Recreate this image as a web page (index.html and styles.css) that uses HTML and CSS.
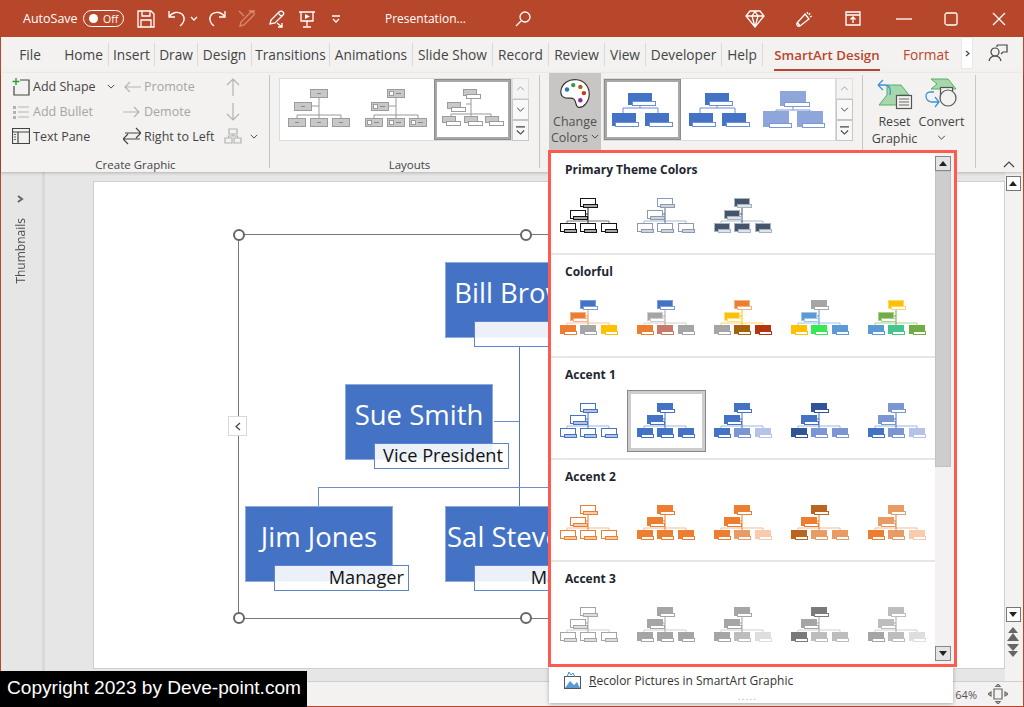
FILE: index.html
```html
<!DOCTYPE html>
<html lang="en">
<head>
<meta charset="utf-8">
<title>Presentation</title>
<link rel="stylesheet" href="styles.css">
</head>
<body>
<svg class="defs" width="0" height="0" aria-hidden="true">
  <symbol id="org" viewBox="0 0 58 36">
    <path class="o-hl" d="M7 25V23H49V25"/>
    <path class="o-vl" d="M28 9V25M25 16H28"/>
    <rect class="o-1" x="20.5" y=".5" width="15" height="8"/><rect class="o-s1" x="23.5" y="6.5" width="14" height="3"/>
    <rect class="o-2" x="10.5" y="12.5" width="15" height="8"/><rect class="o-s2" x="13.5" y="18.5" width="14" height="3"/>
    <rect class="o-3" x=".5" y="25.5" width="15" height="8"/><rect class="o-s3" x="4.5" y="31.5" width="12" height="3"/>
    <rect class="o-4" x="20.5" y="25.5" width="15" height="8"/><rect class="o-s4" x="24.5" y="31.5" width="12" height="3"/>
    <rect class="o-5" x="41.5" y="25.5" width="15" height="8"/><rect class="o-s5" x="45.5" y="31.5" width="12" height="3"/>
  </symbol>
  <symbol id="lay-a" viewBox="0 0 62 38">
    <path class="l-l" d="M9 29V26H53V29M31 9V29M23 17H31"/>
    <rect class="l-b" x="22.5" y=".5" width="17" height="8"/><rect class="l-b" x="6.5" y="13.5" width="17" height="8"/>
    <rect class="l-b" x=".5" y="29.5" width="17" height="8"/><rect class="l-b" x="22.5" y="29.5" width="17" height="8"/><rect class="l-b" x="44.5" y="29.5" width="17" height="8"/>
    <path class="l-d" d="M29 4.500H33M13 17.500H17M7 33.500H11M29 33.500H33M51 33.500H55"/>
  </symbol>
  <symbol id="lay-b" viewBox="0 0 62 38">
    <path class="l-l" d="M9 29V26H53V29M31 9V29M23 17H31"/>
    <rect class="l-b" x="22.500" y=".5" width="17" height="8"/><rect class="l-b" x="6.500" y="13.500" width="17" height="8"/>
    <rect class="l-b" x=".5" y="29.500" width="17" height="8"/><rect class="l-b" x="22.500" y="29.500" width="17" height="8"/><rect class="l-b" x="44.500" y="29.500" width="17" height="8"/>
    <rect class="l-w" x="24.500" y="2.500" width="4" height="4"/><rect class="l-w" x="8.500" y="15.500" width="4" height="4"/><rect class="l-w" x="2.500" y="31.500" width="4" height="4"/><rect class="l-w" x="24.500" y="31.500" width="4" height="4"/><rect class="l-w" x="46.500" y="31.500" width="4" height="4"/>
    <path class="l-d" d="M31 4.500H36M15 17.500H20M9 33.500H14M31 33.500H36M53 33.500H58"/>
  </symbol>
  <symbol id="lay-c" viewBox="0 0 62 38">
    <path class="l-l" d="M9 27V25H49V27M29 9V27M24 15H29"/>
    <rect class="l-b" x="21.500" y=".5" width="13" height="6"/><rect class="l-w2" x="24.500" y="5.500" width="14" height="4"/>
    <rect class="l-b" x="5.500" y="13.500" width="13" height="6"/><rect class="l-w2" x="9.500" y="18.500" width="14" height="4"/>
    <rect class="l-b" x=".5" y="27.500" width="13" height="6"/><rect class="l-w2" x="4.500" y="32.500" width="14" height="4"/>
    <rect class="l-b" x="22.500" y="27.500" width="13" height="6"/><rect class="l-w2" x="26.500" y="32.500" width="14" height="4"/>
    <rect class="l-b" x="43.500" y="27.500" width="13" height="6"/><rect class="l-w2" x="47.500" y="32.500" width="14" height="4"/>
  </symbol>
  <symbol id="big" viewBox="0 0 62 35">
    <path class="b-l" d="M11 21V16H46V21M28 14V16"/>
    <rect class="b-b" x="16" y="1" width="24" height="12"/><rect class="b-s" x="20.500" y="9.500" width="23" height="4"/>
    <rect class="b-b" y="21" width="24" height="13"/><rect class="b-s" x="3.500" y="30.500" width="23" height="4"/>
    <rect class="b-b" x="33" y="21" width="24" height="13"/><rect class="b-s" x="37.500" y="30.500" width="23" height="4"/>
  </symbol>
  <symbol id="big-wide" viewBox="0 0 62 37">
    <path class="b-l" d="M13 21V19H47V21M30 15V19"/>
    <rect class="b-b" x="17" y="0" width="26" height="15"/><rect class="b-s" x="21.500" y="11.500" width="25" height="4"/>
    <rect class="b-b" y="20" width="26" height="16"/><rect class="b-s" x="6.500" y="32.500" width="22" height="4"/>
    <rect class="b-b" x="34" y="20" width="26" height="16"/><rect class="b-s" x="39.500" y="32.500" width="22" height="4"/>
  </symbol>
  <symbol id="chev-d" viewBox="0 0 10 6"><path class="chev" d="M1 1L5 5L9 1"/></symbol>
  <symbol id="chev-u" viewBox="0 0 10 6"><path class="chev" d="M1 5L5 1L9 5"/></symbol>
  <symbol id="more" viewBox="0 0 10 10"><path class="chev" d="M0 1H10M1 5L5 9L9 5"/></symbol>
</svg>

<div class="window">
  <header class="titlebar">
    <span class="autosave">AutoSave</span>
    <span class="toggle"><i class="knob"></i><b class="toggle-off">Off</b></span>
    <svg class="ti m13" width="18" height="18" viewBox="0 0 18 18"><path d="M1 1H14L17 4V17H1ZM5 1V6H13V1M4 17V10H14V17"/></svg>
    <svg class="ti m13" width="18" height="18" viewBox="0 0 18 18"><path d="M1 1V7H7M1 7C4 2 10 1 14 4C18 8 16 13 12 16"/></svg>
    <svg class="ti m4 tiny" width="8" height="5" viewBox="0 0 8 5"><path d="M1 1L4 4L7 1"/></svg>
    <svg class="ti m10" width="18" height="18" viewBox="0 0 18 18"><path d="M17 1V7H11M17 7C14 2 8 1 4 4C0 8 2 13 6 16"/></svg>
    <svg class="ti ti-dim m12" width="18" height="18" viewBox="0 0 18 18"><path d="M2 16L3 12L12 3C13 2 15 2 16 3C17 4 16 5 15 6L6 15ZM1 1L6 6M11 1H17"/></svg>
    <svg class="ti m12" width="18" height="18" viewBox="0 0 18 18"><path d="M2 14L3 10L11 2C12 1 14 1 15 2C16 3 16 4 15 5L7 13ZM10 3L14 7M9 13L14 17M14 13V17H10"/></svg>
    <svg class="ti m12" width="18" height="18" viewBox="0 0 18 18"><path d="M1 2H17M3 2V11H15V2M9 11V16M5 17H13"/><path class="fill" d="M7 4L12 6.500L7 9Z"/></svg>
    <svg class="ti m16 tiny" width="8" height="8" viewBox="0 0 8 8"><path d="M0 1H8M1 4L4 7L7 4"/></svg>
    <span class="doc-title">Presentation...</span>
    <svg class="ti m50" width="16" height="16" viewBox="0 0 16 16"><circle cx="10" cy="6" r="5"/><path d="M6 10L1 15"/></svg>
    <svg class="ti m214" width="20" height="18" viewBox="0 0 20 18"><path d="M5 1H15L19 6L10 17L1 6ZM1 6H19M7 6L10 17L13 6L10 1.500L7 6"/></svg>
    <svg class="ti m30" width="18" height="18" viewBox="0 0 18 18"><path d="M10 4L14 9L5 16C3 17 1 15 2 13ZM5 16L2 12M12 2L13 4M15 3L14 5M17 6L15 7"/></svg>
    <svg class="ti m32" width="16" height="15" viewBox="0 0 16 15"><path d="M1 1H15V14H1ZM1 4H15M8 12V6M5.500 8.500L8 6L10.500 8.500"/></svg>
    <svg class="ti m35" width="16" height="16" viewBox="0 0 16 16"><path d="M0 8H16"/></svg>
    <svg class="ti m32" width="14" height="14" viewBox="0 0 14 14"><rect x="1" y="1" width="12" height="12" rx="2"/></svg>
    <svg class="ti m34" width="14" height="14" viewBox="0 0 14 14"><path d="M1 1L13 13M13 1L1 13"/></svg>
  </header>

  <nav class="tabs">
    <span class="tab plain">File</span>
    <span class="tab">Home</span>
    <span class="tab">Insert</span>
    <span class="tab">Draw</span>
    <span class="tab">Design</span>
    <span class="tab">Transitions</span>
    <span class="tab">Animations</span>
    <span class="tab">Slide Show</span>
    <span class="tab">Record</span>
    <span class="tab">Review</span>
    <span class="tab">View</span>
    <span class="tab">Developer</span>
    <span class="tab">Help</span>
    <span class="tab plain ctx"><span class="ctx-active">SmartArt Design</span></span>
    <span class="tab plain ctx">Format</span>
    <span class="tab-more"><svg width="5" height="7" viewBox="0 0 5 7"><path class="chev" d="M1 1L4 3.500L1 6"/></svg></span>
    <span class="tab-comment"><svg width="20" height="20" viewBox="0 0 20 20"><circle cx="7" cy="9" r="4"/><path d="M1 18C2 14 4 13 7 13C10 13 12 14 13 18M9 2H19V9H15L13 11M9 2V4"/></svg></span>
  </nav>

  <section class="ribbon">
    <div class="group g-create">
      <div class="g-body create-grid">
        <div class="cmd"><svg width="18" height="18" viewBox="0 0 18 18"><path class="i-dark" d="M8 2H17V17H2V8"/><path class="i-green" d="M4 0V7M0.500 3.500H7.500"/></svg><span>Add Shape</span><svg class="cmd-chev" width="8" height="5"><use href="#chev-d"/></svg></div>
        <div class="cmd off"><svg width="18" height="12" viewBox="0 0 18 12"><path class="i-off" d="M18 6H2M7 1L2 6L7 11"/></svg><span>Promote</span></div>
        <div class="cmd off arrows"><svg width="16" height="18" viewBox="0 0 16 18"><path class="i-off" d="M8 18V1M2 7L8 1L14 7"/></svg></div>
        <div class="cmd off"><svg width="18" height="16" viewBox="0 0 18 16"><path class="i-off-f" d="M1 2H4V5H1ZM1 7H4V10H1ZM1 12H4V15H1Z"/><path class="i-off" d="M6 3H17M6 8H17M6 13H17"/></svg><span>Add Bullet</span></div>
        <div class="cmd off"><svg width="18" height="12" viewBox="0 0 18 12"><path class="i-off" d="M0 6H16M11 1L16 6L11 11"/></svg><span>Demote</span></div>
        <div class="cmd off arrows"><svg width="16" height="18" viewBox="0 0 16 18"><path class="i-off" d="M8 0V17M2 11L8 17L14 11"/></svg></div>
        <div class="cmd"><svg width="18" height="16" viewBox="0 0 18 16"><path class="i-dark" d="M.500 .500H17.500V15.500H.500ZM.500 4H17.500M6 4V15.500"/><path class="i-mid" d="M2 6.500H4M2 9H4M2 11.500H4"/></svg><span>Text Pane</span></div>
        <div class="cmd"><svg width="18" height="18" viewBox="0 0 18 18"><path class="i-dark" d="M17 6H2M13 1L18 6L13 11M17 12H1M5 7L0 12L5 17"/></svg><span>Right to Left</span></div>
        <div class="cmd off hier"><svg width="18" height="16" viewBox="0 0 18 16"><path class="i-off" d="M5 1H13V6H5ZM1 10H8V15H1ZM10 10H17V15H10ZM9 6V8M4.500 10V8H13.500V10"/></svg><svg class="cmd-chev" width="8" height="5"><use href="#chev-d"/></svg></div>
      </div>
      <div class="g-label">Create Graphic</div>
    </div>

    <div class="group g-layouts">
      <div class="g-body gallery-row">
        <div class="gallery">
          <div class="gal-item lift"><svg width="62" height="38"><use href="#lay-a"/></svg></div>
          <div class="gal-item lift"><svg width="62" height="38"><use href="#lay-b"/></svg></div>
          <div class="gal-item lift selected"><svg width="62" height="38"><use href="#lay-c"/></svg></div>
        </div>
        <div class="gal-scroll">
          <span class="disabled"><svg width="9" height="5"><use href="#chev-u"/></svg></span>
          <span><svg width="9" height="5"><use href="#chev-d"/></svg></span>
          <span><svg width="9" height="9"><use href="#more"/></svg></span>
        </div>
      </div>
      <div class="g-label">Layouts</div>
    </div>

    <div class="group g-colors">
      <div class="change-colors">
        <svg width="32" height="32" viewBox="0 0 36 36">
          <path class="pal" d="M2 15C3 6 11 1 20 2C29 3 34 10 34 18C34 26 28 34 22 33C18 32 20 27 17 24C14 21 10 24 6 22C3 21 2 18 2 15Z"/>
          <circle class="d1" cx="9" cy="13" r="2.500"/><circle class="d2" cx="16" cy="8" r="2.500"/><circle class="d3" cx="24" cy="10" r="2.500"/><circle class="d4" cx="28" cy="17" r="2.500"/><circle class="d5" cx="24" cy="25" r="2.500"/>
        </svg>
        <span>Change</span>
        <span class="cc-t2">Colors <svg width="8" height="5"><use href="#chev-d"/></svg></span>
      </div>
      <div class="gallery-row">
        <div class="gallery">
          <div class="gal-item selected blue"><svg width="62" height="35"><use href="#big"/></svg></div>
          <div class="gal-item blue"><svg width="62" height="35"><use href="#big"/></svg></div>
          <div class="gal-item pale nudge"><svg width="62" height="37"><use href="#big-wide"/></svg></div>
        </div>
        <div class="gal-scroll">
          <span class="disabled"><svg width="9" height="5"><use href="#chev-u"/></svg></span>
          <span><svg width="9" height="5"><use href="#chev-d"/></svg></span>
          <span><svg width="9" height="9"><use href="#more"/></svg></span>
        </div>
      </div>
    </div>

    <div class="group g-reset">
      <div class="big-btn">
        <svg width="36" height="32" viewBox="0 0 36 32"><path class="gr" d="M10 7H24L32 17H22V27H2L10 17Z"/><path class="bl" d="M1 7L6 2M1 7L6 12M1 7H8C13 7 14 12 13 17"/><rect class="doc" x="19.500" y="17.500" width="15" height="13"/><path class="i-mid" d="M22 21H32M22 24H32M22 27H32"/></svg>
        <span>Reset</span><span>Graphic</span>
      </div>
      <div class="big-btn">
        <svg width="36" height="32" viewBox="0 0 36 32"><path class="gr" d="M7 1H24L32 11H7L13 6Z"/><rect class="doc" x="16.500" y="9.500" width="12" height="12"/><circle class="doc" cx="24" cy="20" r="8"/><path class="bl" d="M10 14H6C1 14 0 22 7 24H15M11 19L15 24L11 29"/></svg>
        <span>Convert</span><svg class="conv-chev" width="9" height="5"><use href="#chev-d"/></svg>
      </div>
    </div>
    <svg class="collapse" width="12" height="7" viewBox="0 0 12 7"><path class="chev" d="M1 6L6 1L11 6"/></svg>
  </section>

  <main class="workspace">
    <aside class="thumbs">
      <svg width="7" height="8" viewBox="0 0 7 8"><path class="chev thick" d="M1 1L5 4L1 7"/></svg>
      <span class="thumbs-label">Thumbnails</span>
    </aside>
    <div class="canvas">
      <div class="slide">
        <div class="frame">
          <i class="handle h-tl"></i><i class="handle h-tm"></i><i class="handle h-bl"></i><i class="handle h-bm"></i><i class="handle h-tr"></i><i class="handle h-br"></i>
        </div>
        <div class="collapse-tab"><svg width="6" height="9" viewBox="0 0 6 9"><path class="chev" d="M5 1L1 4.500L5 8"/></svg></div>
        <i class="ln ln-v"></i><i class="ln ln-sue"></i><i class="ln ln-h"></i><i class="ln ln-jim"></i>
        <div class="node n-bill"><span class="name">Bill Brown</span><span class="role"></span></div>
        <div class="node n-sue"><span class="name">Sue Smith</span><span class="role">Vice President</span></div>
        <div class="node n-jim"><span class="name">Jim Jones</span><span class="role">Manager</span></div>
        <div class="node n-sal"><span class="name">Sal Stevens</span><span class="role">Manager</span></div>
      </div>
    </div>
    <div class="vscroll">
      <span class="vs-btn"><i class="tri-up"></i></span>
      <span class="vs-track"></span>
      <span class="vs-btn"><i class="tri-down"></i></span>
      <svg class="vs-page" width="14" height="32" viewBox="0 0 14 32"><path class="pg" d="M7 1L12 7H2ZM7 7L13 15H1ZM1 18H13L7 25ZM2 25H12L7 31Z"/></svg>
    </div>
  </main>

  <footer class="status">
    <span class="zoom">64%</span>
    <svg width="20" height="20" viewBox="0 0 20 20"><path class="i-mid" d="M6 5H14V15H6ZM10 0L8 2.500H12ZM10 20L8 17.500H12ZM0 10L3 8V12ZM20 10L17 8V12Z"/></svg>
  </footer>

  <div class="menu">
    <div class="panel">
      <div class="sections">
        <section class="sec">
          <h3>Primary Theme Colors</h3>
          <div class="th-row">
            <svg class="th p1" width="58" height="36"><use href="#org"/></svg>
            <svg class="th p2" width="58" height="36"><use href="#org"/></svg>
            <svg class="th p3" width="58" height="36"><use href="#org"/></svg>
          </div>
        </section>
        <section class="sec">
          <h3>Colorful</h3>
          <div class="th-row">
            <svg class="th c1" width="58" height="36"><use href="#org"/></svg>
            <svg class="th c2" width="58" height="36"><use href="#org"/></svg>
            <svg class="th c3" width="58" height="36"><use href="#org"/></svg>
            <svg class="th c4" width="58" height="36"><use href="#org"/></svg>
            <svg class="th c5" width="58" height="36"><use href="#org"/></svg>
          </div>
        </section>
        <section class="sec acc1">
          <h3>Accent 1</h3>
          <div class="th-row">
            <svg class="th v1" width="58" height="36"><use href="#org"/></svg>
            <span class="sel"><svg class="th v2" width="58" height="36"><use href="#org"/></svg></span>
            <svg class="th v3" width="58" height="36"><use href="#org"/></svg>
            <svg class="th v4" width="58" height="36"><use href="#org"/></svg>
            <svg class="th v5" width="58" height="36"><use href="#org"/></svg>
          </div>
        </section>
        <section class="sec acc2">
          <h3>Accent 2</h3>
          <div class="th-row">
            <svg class="th v1" width="58" height="36"><use href="#org"/></svg>
            <svg class="th v2" width="58" height="36"><use href="#org"/></svg>
            <svg class="th v3" width="58" height="36"><use href="#org"/></svg>
            <svg class="th v4" width="58" height="36"><use href="#org"/></svg>
            <svg class="th v5" width="58" height="36"><use href="#org"/></svg>
          </div>
        </section>
        <section class="sec acc3">
          <h3>Accent 3</h3>
          <div class="th-row">
            <svg class="th v1" width="58" height="36"><use href="#org"/></svg>
            <svg class="th v2" width="58" height="36"><use href="#org"/></svg>
            <svg class="th v3" width="58" height="36"><use href="#org"/></svg>
            <svg class="th v4" width="58" height="36"><use href="#org"/></svg>
            <svg class="th v5" width="58" height="36"><use href="#org"/></svg>
          </div>
        </section>
      </div>
      <div class="menu-scroll">
        <span class="ms-btn"><i class="tri-up"></i></span>
        <span class="ms-thumb"></span>
        <span class="ms-track"></span>
        <span class="ms-btn"><i class="tri-down"></i></span>
      </div>
    </div>
    <div class="recolor">
      <svg width="19" height="19" viewBox="0 0 19 19"><rect class="rc-frame" x="1.500" y="5.500" width="16" height="12"/><path class="rc-hill" d="M2 17L7 10L11 14L14 11L17 17Z"/><path class="rc-top" d="M4 6L6 1L8 4L10 2L12 6"/></svg>
      <span><u>R</u>ecolor Pictures in SmartArt Graphic</span>
    </div>
    <div class="grip">.....</div>
  </div>

  <div class="copyright">Copyright 2023 by Deve-point.com</div>
</div>
</body>
</html>
```
FILE: styles.css
```css
* { box-sizing: border-box; }
html, body { margin: 0; padding: 0; }
body { width: 1024px; height: 707px; overflow: hidden; font-family: "Open Sans", "Noto Sans", sans-serif; color: #444; }
.defs { position: absolute; }
svg { display: block; flex: none; fill: none; }
i { display: block; font-style: normal; }

.window { position: relative; width: 1024px; height: 707px; padding: 0 1px 1px; background: #b7472a; display: flex; flex-direction: column; overflow: hidden; }

/* title bar */
.titlebar { height: 37px; flex: none; display: flex; align-items: center; padding-left: 22px; color: #fff; }
.autosave { width: 54px; font-size: 12.5px; white-space: nowrap; }
.toggle { margin-left: 6px; width: 41px; height: 17px; border: 1.500px solid #fff; border-radius: 9px; display: flex; align-items: center; padding-left: 5px; }
.knob { width: 9px; height: 9px; border-radius: 50%; background: #fff; }
.toggle-off { font-weight: 400; font-size: 10.500px; margin-left: 5px; }
.ti { stroke: #fff; stroke-width: 1.300; }
.ti path, .ti rect, .ti circle { fill: none; }
.ti path.fill { fill: #fff; stroke: none; }
.ti-dim { stroke: #d98a70; }
.m4 { margin-left: 4px; } .m10 { margin-left: 10px; } .m12 { margin-left: 12px; } .m13 { margin-left: 13px; }
.m16 { margin-left: 16px; } .m30 { margin-left: 30px; } .m32 { margin-left: 32px; } .m34 { margin-left: 34px; }
.m35 { margin-left: 35px; } .m50 { margin-left: 50px; } .m214 { margin-left: 214px; }
.doc-title { margin-left: 45px; width: 80px; font-size: 12px; white-space: nowrap; }

/* tabs */
.tabs { height: 36px; flex: none; background: #f3f2f1; display: grid; grid-template-columns: 58px 50px 46px 43px 54px 78px 83px 80px 56px 56px 41px 76px 41px 128px 70px 12px 1fr; align-items: center; font-size: 13.700px; }
.tab { height: 23px; line-height: 23px; text-align: center; white-space: nowrap; border-right: 1px solid #dbdad9; margin-top: -2px; }
.tab.plain { border-right: 0; }
.ctx { color: #b7472a; }
.ctx-active { display: inline-block; font-weight: 600; font-size: 13.300px; border-bottom: 2px solid #b7472a; height: 27px; }
.tab-more { height: 32px; margin-top: -4px; background: #fff; border: 1px solid #e8e8e8; display: flex; align-items: center; justify-content: center; }
.tab-comment { display: flex; justify-content: center; margin-top: -4px; }
.tab-comment path, .tab-comment circle { stroke: #444; stroke-width: 1.200; }
.chev { stroke: #444; stroke-width: 1.200; fill: none; }
.chev.thick { stroke-width: 2; stroke: #666; }

/* ribbon */
.ribbon { height: 99px; flex: none; background: #f3f2f1; display: flex; position: relative; box-shadow: 0 1px 3px rgba(0, 0, 0, .22); z-index: 1; }
.group { display: flex; flex-direction: column; position: relative; }
.group::after { content: ""; position: absolute; right: 0; top: 2px; bottom: 4px; width: 1px; background: #c8c6c4; }
.g-create { width: 269px; }
.g-layouts { width: 270px; padding-left: 9px; }
.g-colors { width: 323px; padding-left: 9px; flex-direction: row; }
.g-reset { width: 113px; flex-direction: row; padding-left: 8px; }
.g-body { flex: 1; }
.g-label { height: 16px; flex: none; display: flex; align-items: center; justify-content: center; font-size: 11.500px; }
.create-grid { display: grid; grid-template-columns: 111px 101px 1fr; grid-template-rows: 25px 25px 24px; align-content: start; padding: 1px 0 0 11px; font-size: 12.500px; white-space: nowrap; }
.cmd { display: flex; align-items: center; gap: 3px; }
.cmd.off { color: #a6a5a4; }
.cmd-chev { margin-left: 8px; }
.arrows svg:first-child { margin-left: 1px; }
.hier { gap: 0; }
.i-dark { stroke: #444; stroke-width: 1.200; }
.i-mid { stroke: #666; stroke-width: 1.200; }
.i-green { stroke: #22a33a; stroke-width: 1.400; }
.i-off { stroke: #b4b3b2; stroke-width: 1.200; }
.i-off-f { fill: #b4b3b2; }

.gallery-row { display: flex; padding-top: 5px; height: 68px; }
.gallery { width: 233px; height: 63px; background: #fff; border: 1px solid #dcdbda; display: flex; }
.gal-item { width: 77px; height: 61px; display: flex; align-items: center; justify-content: center; flex: none; }
.gal-item svg { filter: blur(.3px); }
.lift { padding-bottom: 3px; }
.nudge { padding-right: 5px; }
.gal-item.selected { border: 3px solid #a8a8a8; outline: 1px solid #8c8c8c; outline-offset: -1px; }
.gal-scroll { width: 17px; height: 63px; display: flex; flex-direction: column; }
.gal-scroll span { flex: 1; border: 1px solid #c8c6c4; background: #f8f8f8; display: flex; align-items: center; justify-content: center; }
.gal-scroll .disabled { opacity: .45; }
.l-l { stroke: #999; }
.l-b { fill: #c8c8c8; stroke: #9c9c9c; }
.l-d { stroke: #888; }
.l-w { fill: #fff; stroke: #9c9c9c; }
.l-w2 { fill: #fff; stroke: #9c9c9c; }

.change-colors { width: 52px; height: 77px; background: #c8c6c4; display: flex; flex-direction: column; align-items: center; margin-right: 2px; padding-top: 5px; font-size: 12.500px; line-height: 16px; color: #505050; }
.change-colors svg:first-child { margin-bottom: 4px; }
.cc-t2 { display: flex; align-items: center; gap: 3px; white-space: nowrap; }
.pal { fill: #fff; stroke: #333; stroke-width: 1.300; }
.d1 { fill: #2f6fc4; } .d2 { fill: #3d9a4a; } .d3 { fill: #a5601c; } .d4 { fill: #c8381f; } .d5 { fill: #8a2aa0; }
.blue { --bf: #4472c4; --bs: #6a8fd3; }
.pale { --bf: #8ea6d9; --bs: #7c97d2; }
.b-b { fill: var(--bf); stroke: none; }
.b-s { fill: #fff; stroke: var(--bs); }
.b-l { stroke: var(--bs); }

.big-btn { width: 47px; display: flex; flex-direction: column; align-items: center; padding-top: 5px; font-size: 12.500px; line-height: 17px; flex: none; white-space: nowrap; }
.big-btn svg:first-child { margin-bottom: 3px; }
.conv-chev { margin-top: 5px; }
.gr { fill: #a7d7ac; stroke: #53b063; }
.bl { stroke: #3b93d8; stroke-width: 1.300; }
.doc { fill: #f3f2f1; stroke: #555; stroke-width: 1.200; }
.collapse { position: absolute; left: 1002px; bottom: 4px; }

/* workspace */
.workspace { flex: 1; min-height: 0; display: flex; background: #e6e6e6; }
.thumbs { width: 44px; flex: none; border-right: 3px solid #d9d9d9; display: flex; flex-direction: column; align-items: center; padding: 23px 2px 0 0; gap: 15px; }
.thumbs-label { writing-mode: vertical-rl; transform: rotate(180deg); font-size: 12px; line-height: 14px; color: #505050; }
.canvas { flex: 1; padding: 10px 1px 13px 49px; min-width: 0; display: flex; }
.slide { position: relative; flex: 1; background: #fff; box-shadow: 0 0 0 1px #cfcfcf; }
.frame { position: absolute; left: 144px; top: 52px; width: 576px; height: 385px; border: 1px solid #777; }
.handle { position: absolute; width: 12px; height: 12px; border-radius: 50%; border: 2px solid #666; background: #fff; z-index: 3; }
.h-tl { left: -6px; top: -6px; } .h-tm { left: 281px; top: -6px; } .h-tr { right: -6px; top: -6px; }
.h-bl { left: -6px; bottom: -6px; } .h-bm { left: 281px; bottom: -6px; } .h-br { right: -6px; bottom: -6px; }
.collapse-tab { position: absolute; left: 134px; top: 234px; width: 19px; height: 20px; background: #fff; border: 1px solid #d9d9d9; display: flex; align-items: center; justify-content: center; z-index: 3; }
.ln { position: absolute; background: #6c8ec9; }
.ln-v { left: 425px; top: 165px; width: 1px; height: 159px; background: #5b76b4; }
.ln-sue { left: 400px; top: 239px; width: 25px; height: 1px; }
.ln-h { left: 224px; top: 305px; width: 400px; height: 1px; }
.ln-jim { left: 224px; top: 305px; width: 1px; height: 19px; }
.node { position: absolute; width: 148px; height: 76px; background: #4472c4; border: 1px solid #8faadc; color: #fff; font-size: 27.500px; line-height: 1; display: flex; justify-content: center; padding-top: 16px; white-space: nowrap; }
.role { position: absolute; left: 28px; top: 58px; width: 135px; height: 26px; background: rgba(255, 255, 255, .9); border: 1px solid #5b85cf; color: #111; font-size: 18.200px; line-height: 22px; text-align: right; padding-right: 4px; }
.n-bill { left: 351px; top: 80px; }
.n-sue { left: 251px; top: 202px; }
.n-sue .role { padding-right: 5px; }
.n-jim { left: 151px; top: 324px; }
.n-sal { left: 351px; top: 324px; }
.n-sal .role { padding-right: 2px; }

.vscroll { width: 18px; flex: none; background: #f3f2f1; display: flex; flex-direction: column; align-items: center; padding: 4px 2px 0 0; position: relative; }
.vs-btn { width: 15px; height: 15px; background: #fff; border: 1px solid #777; display: flex; align-items: center; justify-content: center; flex: none; }
.vs-track { height: 416px; flex: none; }
.vs-page { margin-top: 4px; }
.pg { fill: #666; }
.tri-up { border-left: 4px solid transparent; border-right: 4px solid transparent; border-bottom: 5px solid #222; }
.tri-down { border-left: 4px solid transparent; border-right: 4px solid transparent; border-top: 5px solid #222; }

/* status bar */
.status { height: 25px; flex: none; background: #f3f2f1; border-top: 1px solid #cfcfcf; display: flex; align-items: center; justify-content: flex-end; padding-right: 15px; font-size: 11px; gap: 11px; position: relative; }
.zoom { color: #555; }

/* colors menu */
.menu { position: absolute; left: 548px; top: 150px; width: 409px; z-index: 5; }
.panel { height: 517px; border: 3px solid #ff5a50; background: #fff; display: flex; position: relative; z-index: 1; }
.sections { width: 384px; flex: none; }
.sec { height: 102px; border-bottom: 2px solid #e6e6e6; }
.sec:nth-child(2) { height: 103px; }
.sec:last-child { border-bottom: 0; }
.sec h3 { margin: 0; padding: 7px 0 0 14px; height: 26px; font-size: 12px; line-height: 20px; font-weight: 700; color: #1e2630; }
.th-row { display: flex; gap: 19px; padding: 19px 0 0 9px; }
.th { overflow: visible; filter: blur(.3px); }
.sel { position: relative; display: block; width: 58px; height: 36px; }
.sel::before { content: ""; position: absolute; left: -10px; top: -13px; width: 77px; height: 60px; border: 1px solid #888; box-shadow: inset 0 0 0 3px #ccc; }
.sel .th { position: relative; }
.menu-scroll { flex: 1; background: #f3f2f1; display: flex; flex-direction: column; padding: 3px 2px 3px 0; }
.ms-btn { height: 15px; width: 16px; background: #e4e4e4; border: 1px solid #888; display: flex; align-items: center; justify-content: center; flex: none; }
.ms-thumb { height: 296px; width: 16px; background: #cdcdcd; border: 1px solid #c2c2c2; flex: none; }
.ms-track { flex: 1; }

.recolor { height: 37px; margin: -1px 4px 0 1px; background: #fff; display: flex; align-items: flex-start; gap: 7px; padding: 5px 0 0 14px; font-size: 12px; line-height: 20px; color: #333; box-shadow: 0 1px 4px rgba(0, 0, 0, .3); }
.rc-frame { stroke: #555; fill: #fff; }
.rc-hill { fill: #5b9bd5; }
.rc-top { stroke: #3b8fd0; }
.grip { position: absolute; left: 190px; top: 542px; font-size: 9px; letter-spacing: 1.500px; color: #999; line-height: 10px; }

.copyright { position: absolute; left: 0; top: 671px; width: 307px; height: 36px; background: #000; color: #fff; font-family: "Liberation Sans", Arial, sans-serif; font-size: 19.100px; line-height: 33px; padding-left: 7px; white-space: nowrap; z-index: 6; }

/* org thumbnails */
.th { --f1: #4472c4; --f2: #4472c4; --f3: #4472c4; --f4: #4472c4; --f5: #4472c4; --st: #6a8fd3; --sub: #fff; --vl: #4472c4; --hl: #8faadc; }
.o-hl { stroke: var(--hl); }
.o-vl { stroke: var(--vl); }
.o-1 { fill: var(--f1); stroke: var(--st1, var(--st)); }
.o-2 { fill: var(--f2); stroke: var(--st2, var(--st)); }
.o-3 { fill: var(--f3); stroke: var(--st3, var(--st)); }
.o-4 { fill: var(--f4); stroke: var(--st4, var(--st)); }
.o-5 { fill: var(--f5); stroke: var(--st5, var(--st)); }
.o-s1 { fill: var(--sub); stroke: var(--st1, var(--st)); }
.o-s2 { fill: var(--sub); stroke: var(--st2, var(--st)); }
.o-s3 { fill: var(--sub); stroke: var(--st3, var(--st)); }
.o-s4 { fill: var(--sub); stroke: var(--st4, var(--st)); }
.o-s5 { fill: var(--sub); stroke: var(--st5, var(--st)); }

.p1 { --f1: #fff; --f2: #fff; --f3: #fff; --f4: #fff; --f5: #fff; --st: #151515; --sub: #a8a8a8; --vl: #222; --hl: #777; }
.p2 { --f1: #fff; --f2: #fff; --f3: #fff; --f4: #fff; --f5: #fff; --st: #8a9ab3; --sub: #cfd3da; --vl: #566b8a; --hl: #adb9ca; }
.p3 { --f1: #44546a; --f2: #44546a; --f3: #44546a; --f4: #44546a; --f5: #44546a; --st: #a5b1c4; --sub: #e3e3e3; --vl: #44546a; --hl: #adb9ca; }
.c1 { --f1: #4472c4; --st1: #7d9bd8; --f2: #ed7d31; --st2: #f4b183; --f3: #ed7d31; --st3: #ed7d31; --f4: #a5a5a5; --st4: #a5a5a5; --f5: #ffc000; --st5: #ffc000; --vl: #ed9a5f; --hl: #f4c2a0; }
.c2 { --f1: #4472c4; --st1: #7d9bd8; --f2: #a5a5a5; --st2: #cfcfcf; --f3: #ed7d31; --st3: #ed7d31; --f4: #c9796a; --st4: #c9796a; --f5: #a5a5a5; --st5: #a5a5a5; --vl: #a5a5a5; --hl: #d0d0d0; }
.c3 { --f1: #ed7d31; --st1: #f4b183; --f2: #ffc000; --st2: #ffe08a; --f3: #a5a5a5; --st3: #a5a5a5; --f4: #a5620c; --st4: #a5620c; --f5: #b5330f; --st5: #b5330f; --vl: #ffc000; --hl: #ffd966; }
.c4 { --f1: #a5a5a5; --st1: #a5a5a5; --f2: #5b9bd5; --st2: #a3c6e8; --f3: #ffc000; --st3: #ffc000; --f4: #36e852; --st4: #36e852; --f5: #5b9bd5; --st5: #5b9bd5; --vl: #5b9bd5; --hl: #9dc3e6; }
.c5 { --f1: #ffc000; --st1: #ffd966; --f2: #70ad47; --st2: #a9d18e; --f3: #5b9bd5; --st3: #5b9bd5; --f4: #44c48f; --st4: #44c48f; --f5: #70ad47; --st5: #70ad47; --vl: #70ad47; --hl: #a9d18e; }

.acc1 { --main: #4472c4; --dark: #2f5597; --mid: #7b96d3; --light: #a5b9e3; --pale: #b4c3e6; --line: #9db5e0; }
.acc2 { --main: #ed7d31; --dark: #b9651f; --mid: #e99b66; --light: #f4b183; --pale: #f8cbad; --line: #f1bb96; }
.acc3 { --main: #a5a5a5; --dark: #7a7a7a; --mid: #bdbdbd; --light: #cccccc; --pale: #dedede; --line: #cfcfcf; }
.v1 { --f1: #fff; --f2: #fff; --f3: #fff; --f4: #fff; --f5: #fff; --st: var(--main); --sub: var(--pale); --vl: var(--main); --hl: var(--line); }
.v2 { --f1: var(--main); --f2: var(--main); --f3: var(--main); --f4: var(--main); --f5: var(--main); --st: var(--main); --vl: var(--main); --hl: var(--line); }
.v3 { --f1: var(--main); --f2: var(--main); --f3: var(--main); --f4: var(--mid); --f5: var(--pale); --st1: var(--main); --st2: var(--main); --st3: var(--main); --st4: var(--mid); --st5: var(--pale); --vl: var(--main); --hl: var(--line); }
.v4 { --f1: var(--dark); --f2: var(--main); --f3: var(--dark); --f4: var(--mid); --f5: var(--mid); --st1: var(--dark); --st2: var(--main); --st3: var(--dark); --st4: var(--mid); --st5: var(--mid); --vl: var(--main); --hl: var(--line); }
.v5 { --f1: var(--mid); --f2: var(--mid); --f3: var(--main); --f4: var(--mid); --f5: var(--pale); --st1: var(--mid); --st2: var(--mid); --st3: var(--main); --st4: var(--mid); --st5: var(--pale); --vl: var(--main); --hl: var(--line); }
```
